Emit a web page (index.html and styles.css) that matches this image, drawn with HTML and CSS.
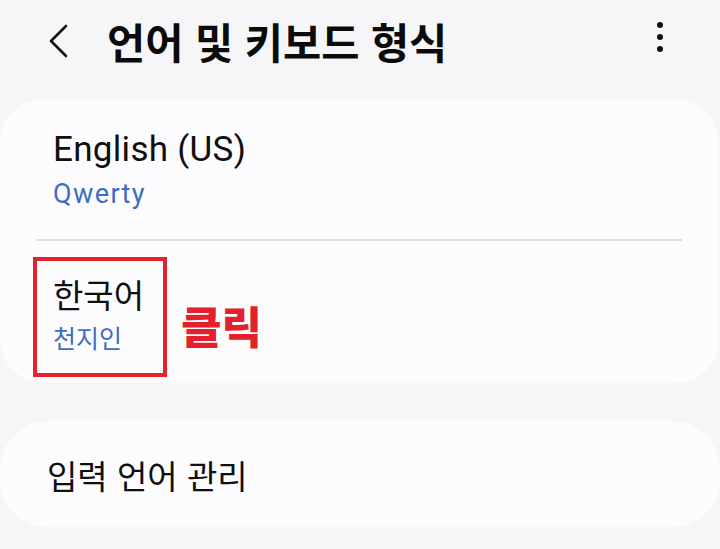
FILE: index.html
```html
<!DOCTYPE html>
<html lang="ko">
<head>
<meta charset="utf-8">
<link rel="stylesheet" href="styles.css">
</head>
<body>
<div class="screen">
  <header class="appbar">
    <button class="back" aria-label="뒤로">
      <svg width="24" height="34" viewBox="0 0 24 34"><path d="M20 2 L5 17 L20 32" fill="none" stroke="#111" stroke-width="2.6" stroke-linecap="round" stroke-linejoin="round"/></svg>
    </button>
    <h1 class="title">언어 및 키보드 형식</h1>
    <button class="more" aria-label="더보기">
      <span class="dot"></span><span class="dot"></span><span class="dot"></span>
    </button>
  </header>

  <section class="card card-lang">
    <div class="row">
      <div class="row-title latin">English (US)</div>
      <div class="row-sub latin">Qwerty</div>
    </div>
    <div class="divider"></div>
    <div class="row row-ko">
      <div class="row-title">한국어</div>
      <div class="row-sub">천지인</div>
      <div class="highlight"></div>
      <div class="click-label">클릭</div>
    </div>
  </section>

  <section class="card card-manage">
    <div class="manage-title">입력 언어 관리</div>
  </section>
</div>
</body>
</html>
```

FILE: styles.css
```css
* { box-sizing: border-box; }
html, body {
  margin: 0;
  padding: 0;
  background: #f6f6f8;
}
body {
  width: 720px;
  height: 549px;
  overflow: hidden;
  font-family: "Noto Sans CJK KR", "Noto Sans", sans-serif;
  color: #111;
}
.screen {
  display: flex;
  flex-direction: column;
}
.appbar {
  height: 99px;
  display: flex;
  align-items: flex-start;
  padding-top: 10px;
}
.back {
  border: 0;
  background: none;
  padding: 0;
  margin: 14px 0 0 46px;
  width: 24px;
  height: 34px;
}
.back svg { display: block; }
.title {
  margin: 0 0 0 37px;
  font-size: 41.5px;
  font-weight: 700;
  line-height: 62px;
  letter-spacing: 0;
  color: #0b0b0b;
}
.more {
  margin: 12px 57px 0 auto;
  border: 0;
  background: none;
  padding: 0;
  width: 6px;
  display: flex;
  flex-direction: column;
  gap: 6px;
}
.dot {
  width: 6px;
  height: 6px;
  border-radius: 50%;
  background: #111;
}
.card {
  background: #fcfcfe;
  border-radius: 44px;
  width: 719px;
}
.card-lang {
  height: 284px;
  display: flex;
  flex-direction: column;
}
.row {
  height: 140px;
  padding: 28px 0 0 53px;
  display: flex;
  flex-direction: column;
}
.row-ko {
  position: relative;
  height: 142px;
  padding-top: 29px;
}
.row-title {
  font-size: 33px;
  line-height: 48px;
  color: #0f0f0f;
}
.latin {
  font-family: "Roboto", "Noto Sans", sans-serif;
}
.row-title.latin {
  font-size: 35px;
  letter-spacing: 0.3px;
  line-height: 46px;
}
.row-sub {
  font-size: 25px;
  line-height: 38px;
  color: #3d6ec4;
}
.row-sub.latin {
  font-size: 27px;
  letter-spacing: 1.4px;
  line-height: 38px;
  margin-top: 2px;
}
.divider {
  height: 2px;
  background: #dedee0;
  margin: 0 37px;
}
.highlight {
  position: absolute;
  left: 33px;
  top: 16px;
  width: 134px;
  height: 120px;
  border: 4px solid #e3202b;
}
.click-label {
  position: absolute;
  left: 181px;
  top: 54px;
  font-size: 44px;
  font-weight: 900;
  line-height: 60px;
  color: #e3202b;
}
.card-manage {
  margin-top: 38px;
  height: 106px;
  width: 720px;
  border-radius: 48px;
  display: flex;
  align-items: center;
  padding-left: 47px;
}
.manage-title {
  font-size: 33px;
  line-height: 46px;
  margin-top: 2px;
  color: #0f0f0f;
}
```
